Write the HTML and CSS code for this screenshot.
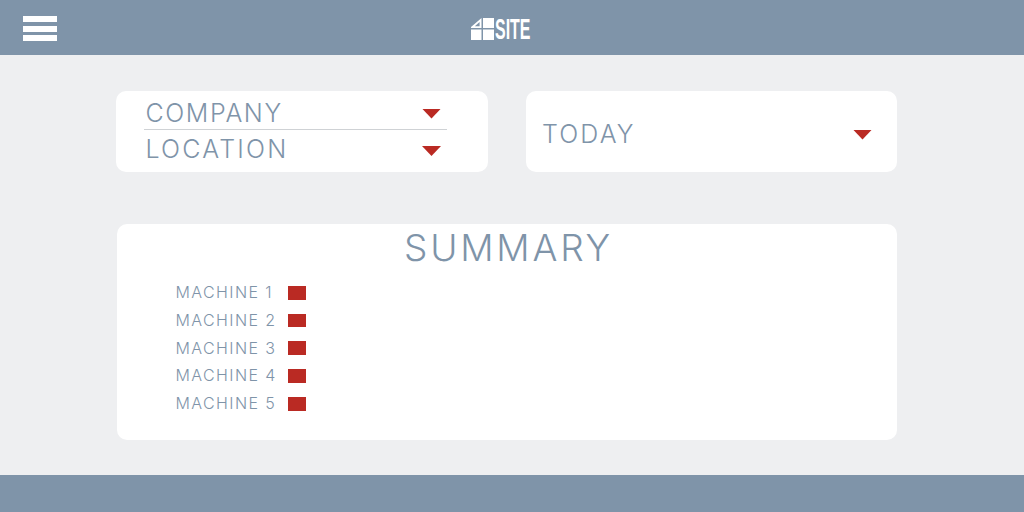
FILE: index.html
```html
<!DOCTYPE html>
<html lang="en">
<head>
<meta charset="utf-8">
<title>4SITE</title>
<link rel="stylesheet" href="styles.css">
</head>
<body>
<header class="topbar">
  <div class="burger"><span></span><span></span><span></span></div>
  <div class="logo">
    <svg class="logo-mark" width="23" height="22" viewBox="0 0 23 22">
      <path fill-rule="evenodd" d="M0 9L10.500 0V10H0ZM3.800 8.200H8.600V4Z" fill="#fff"/>
      <rect x="12" y="0" width="11" height="10" fill="#fff"/>
      <rect x="0" y="11.500" width="10.500" height="10.500" fill="#fff"/>
      <rect x="12" y="11.500" width="11" height="10.500" fill="#fff"/>
    </svg>
    <span class="logo-text">SITE</span>
  </div>
</header>
<main class="content">
  <section class="filters">
    <div class="card card-stack">
      <div class="select select-company"><span>COMPANY</span><i class="caret"></i></div>
      <div class="select select-location"><span>LOCATION</span><i class="caret"></i></div>
    </div>
    <div class="card card-single">
      <div class="select select-today"><span>TODAY</span><i class="caret"></i></div>
    </div>
  </section>
  <section class="card summary">
    <h1>SUMMARY</h1>
    <ul class="machines">
      <li><span>MACHINE 1</span><i class="status"></i></li>
      <li><span>MACHINE 2</span><i class="status"></i></li>
      <li><span>MACHINE 3</span><i class="status"></i></li>
      <li><span>MACHINE 4</span><i class="status"></i></li>
      <li><span>MACHINE 5</span><i class="status"></i></li>
    </ul>
  </section>
</main>
<footer class="bottombar"></footer>
</body>
</html>
```
FILE: styles.css
```css
* { box-sizing: border-box; }
html, body { margin: 0; height: 100%; }
body {
  width: 1024px;
  height: 512px;
  overflow: hidden;
  display: flex;
  flex-direction: column;
  background: #eeeff1;
  font-family: "Inter", "Liberation Sans", sans-serif;
  font-weight: 300;
  color: #7f94a9;
}
.topbar {
  height: 55px;
  flex: none;
  background: #7f94a9;
  display: flex;
  align-items: center;
  padding-left: 23px;
}
.burger { width: 34px; display: flex; flex-direction: column; gap: 3.500px; margin-top: 2px; }
.burger span { display: block; height: 6px; background: #fff; }
.logo { margin-left: 414px; display: flex; align-items: center; gap: 1px; color: #fff; margin-top: 3px; }
.logo-mark { display: block; }
.logo-text {
  font-family: "Liberation Sans", sans-serif;
  font-weight: 700;
  font-size: 29px;
  line-height: 24px;
  width: 36px;
  transform: scaleX(0.55);
  transform-origin: left center;
}
.content { flex: 1; padding: 36px 127px 35px 116px; display: flex; flex-direction: column; }
.filters { display: flex; gap: 38px; height: 81px; }
.card { background: #fff; border-radius: 10px; }
.card-stack { width: 372px; padding: 5px 41px 0 28px; }
.card-single { width: 371px; padding: 6px 25px 0 16px; display: flex; align-items: center; }
.select { display: flex; justify-content: space-between; align-items: center; font-size: 25px; letter-spacing: 1.600px; line-height: 33px; }
.select-today { width: 100%; letter-spacing: 2.100px; }
.select-company { height: 34px; padding: 2px 6px 0 1.500px; border-bottom: 1px solid #cfd2d5; }
.select-location { height: 39px; padding: 0 6px 0 1.500px; letter-spacing: 2.200px; }
.select-location .caret { margin-top: 3px; }
.caret {
  display: block;
  width: 19px;
  height: 10px;
  background: #ba2a23;
  clip-path: polygon(0 0, 100% 0, 50% 100%);
}
.summary { margin: 52px 0 0 1px; height: 216px; padding-top: 3px; }
.summary h1 { margin: 0; padding-left: 3px; text-align: center; font-size: 37px; font-weight: 300; letter-spacing: 2.800px; line-height: 42px; }
.machines { list-style: none; margin: 13px 0 0; padding: 0 0 0 58.500px; display: flex; flex-direction: column; gap: 7.750px; }
.machines li { display: flex; align-items: center; height: 20px; font-size: 16px; letter-spacing: 1.400px; }
.machines span { width: 112.500px; }
.status { display: block; width: 18px; height: 14px; margin-top: 1.200px; background: #ba2a23; }
.machines li:nth-child(2) .status { height: 13px; }
.bottombar { height: 37px; flex: none; background: #7f94a9; }
```
